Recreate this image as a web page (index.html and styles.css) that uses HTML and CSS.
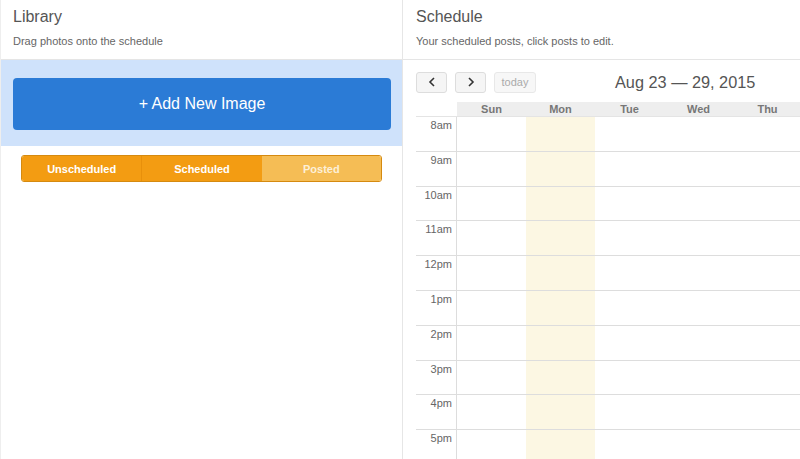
FILE: index.html
```html
<!DOCTYPE html>
<html>
<head>
<meta charset="utf-8">
<link rel="stylesheet" href="styles.css">
</head>
<body>
<div class="app">
  <section class="library">
    <header class="panel-head">
      <h1 class="panel-title">Library</h1>
      <p class="panel-sub">Drag photos onto the schedule</p>
    </header>
    <div class="upload-zone">
      <button class="add-btn">+ Add New Image</button>
    </div>
    <div class="tabs">
      <div class="tab active">Unscheduled</div>
      <div class="tab active">Scheduled</div>
      <div class="tab light">Posted</div>
    </div>
  </section>
  <section class="schedule">
    <header class="panel-head">
      <h1 class="panel-title">Schedule</h1>
      <p class="panel-sub">Your scheduled posts, click posts to edit.</p>
    </header>
    <div class="cal">
      <div class="toolbar">
        <button class="nav-btn">
          <svg width="8" height="10" viewBox="0 0 8 10"><path d="M6 1 L2 5 L6 9" fill="none" stroke="#333" stroke-width="1.6"/></svg>
        </button>
        <button class="nav-btn">
          <svg width="8" height="10" viewBox="0 0 8 10"><path d="M2 1 L6 5 L2 9" fill="none" stroke="#333" stroke-width="1.6"/></svg>
        </button>
        <button class="today-btn">today</button>
        <h2 class="cal-title">Aug 23 — 29, 2015</h2>
      </div>
      <div class="grid">
        <div class="head-row">
          <div class="axis-head"></div>
          <div class="day-head">Sun</div>
          <div class="day-head">Mon</div>
          <div class="day-head">Tue</div>
          <div class="day-head">Wed</div>
          <div class="day-head">Thu</div>
        </div>
        <div class="body">
          <div class="axis">
            <div class="slot">8am</div>
            <div class="slot">9am</div>
            <div class="slot">10am</div>
            <div class="slot">11am</div>
            <div class="slot">12pm</div>
            <div class="slot">1pm</div>
            <div class="slot">2pm</div>
            <div class="slot">3pm</div>
            <div class="slot">4pm</div>
            <div class="slot">5pm</div>
          </div>
          <div class="days">
            <div class="day"></div>
            <div class="day today"></div>
            <div class="day"></div>
            <div class="day"></div>
            <div class="day"></div>
          </div>
          <div class="lines">
            <div class="line"></div><div class="line"></div><div class="line"></div>
            <div class="line"></div><div class="line"></div><div class="line"></div>
            <div class="line"></div><div class="line"></div><div class="line"></div>
            <div class="line"></div>
          </div>
        </div>
      </div>
    </div>
  </section>
</div>
</body>
</html>
```
FILE: styles.css
```css
* { box-sizing: border-box; }
html, body { margin: 0; padding: 0; }
body {
  font-family: "Liberation Sans", Arial, sans-serif;
  background: #fff;
  width: 800px;
  height: 459px;
  overflow: hidden;
}
.app {
  display: flex;
  height: 459px;
}
.library {
  width: 403px;
  flex: none;
  border-left: 1px solid #eee;
  border-right: 1px solid #e6e6e6;
}
.schedule {
  flex: 1;
  overflow: hidden;
}
.panel-head {
  height: 60px;
  border-bottom: 1px solid #e5e5e5;
  padding: 8px 0 0 12px;
}
.schedule .panel-head { padding-left: 13px; }
.panel-title {
  margin: 0;
  font-size: 16px;
  font-weight: normal;
  color: #555;
  line-height: 18px;
}
.panel-sub {
  margin: 8px 0 0;
  font-size: 11px;
  color: #666;
  line-height: 14px;
}
.upload-zone {
  background: #cfe2fb;
  height: 86px;
  padding: 18px 11px 0 12px;
}
.add-btn {
  display: block;
  width: 100%;
  height: 52px;
  border: none;
  border-radius: 4px;
  background: #2b7bd6;
  color: #fff;
  font-family: "Liberation Sans", Arial, sans-serif;
  font-size: 16px;
  padding: 0;
}
.tabs {
  display: flex;
  margin: 9px 0 0 20px;
  width: 361px;
  height: 27px;
  border: 1px solid #d58a10;
  border-radius: 3px;
  overflow: hidden;
}
.tab {
  flex: 1;
  display: flex;
  align-items: center;
  justify-content: center;
  font-size: 11px;
  font-weight: bold;
  color: #fff;
}
.tab.active { background: #f39c12; }
.tab.active + .tab.active { border-left: 1px solid #e8900b; }
.tab.light { background: #f5bd55; color: #fdf0d8; }
.cal {
  padding: 12px 0 0 13px;
  width: 400px;
}
.toolbar {
  display: flex;
  align-items: center;
  height: 20px;
}
.nav-btn {
  width: 31px;
  height: 21px;
  margin-right: 8px;
  background: #f5f5f5;
  border: 1px solid #ddd;
  border-radius: 3px;
  display: flex;
  align-items: center;
  justify-content: center;
  padding: 0;
}
.today-btn {
  width: 42px;
  height: 21px;
  background: #f7f7f7;
  border: 1px solid #e8e8e8;
  border-radius: 3px;
  color: #aaa;
  font-family: "Liberation Sans", Arial, sans-serif;
  font-size: 11px;
  padding: 0;
}
.cal-title {
  margin: 0 0 0 79px;
  font-size: 16.3px;
  font-weight: normal;
  color: #555;
  white-space: nowrap;
}
.grid {
  margin-top: 10px;
}
.head-row {
  display: flex;
  height: 14px;
}
.axis-head { width: 41px; flex: none; }
.day-head {
  width: 69px;
  flex: none;
  background: #eee;
  font-size: 11px;
  font-weight: bold;
  color: #777;
  text-align: center;
  line-height: 14px;
}
.body {
  position: relative;
  display: flex;
  height: 360px;
}
.axis {
  width: 41px;
  flex: none;
  border-right: 1px solid #ddd;
}
.slot {
  height: 34.8px;
  font-size: 11px;
  color: #666;
  text-align: right;
  padding: 3px 4px 0 0;
}
.days {
  display: flex;
}
.day {
  width: 69px;
  flex: none;
}
.day.today { background: #fcf7e3; }
.lines {
  position: absolute;
  left: 0;
  top: 0;
  right: 0;
  pointer-events: none;
}
.line {
  height: 34.8px;
  border-top: 1px solid #ddd;
}
.line:first-child { border-top-color: #e4e4e4; }
```
